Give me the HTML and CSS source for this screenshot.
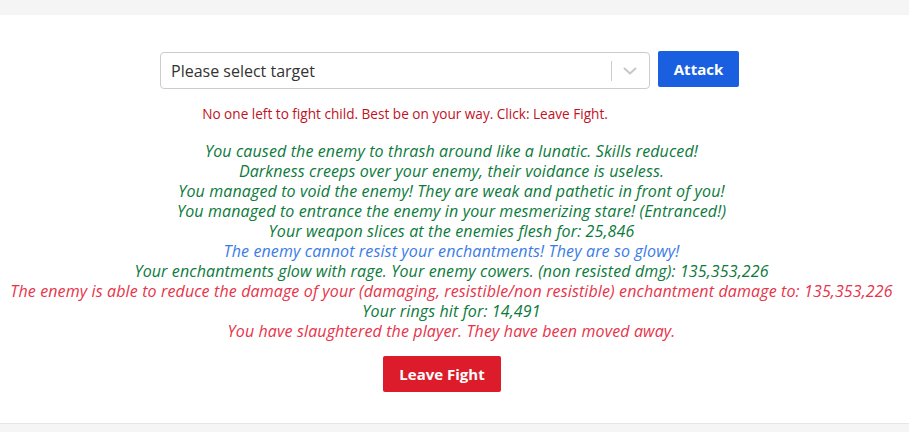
FILE: index.html
```html
<!DOCTYPE html>
<html>
<head>
<meta charset="utf-8">
<link rel="stylesheet" href="styles.css">
</head>
<body>
<div class="topbar"></div>
<main class="card">
  <div class="attack-row">
    <div class="select-col">
      <div class="select">
        <span class="placeholder">Please select target</span>
        <span class="indicators">
          <span class="sep"></span>
          <svg class="chev" width="20" height="20" viewBox="0 0 20 20"><path d="M4.5 7.5 L10 12.5 L15.5 7.5" fill="none" stroke="#c8c8c8" stroke-width="2" stroke-linecap="round" stroke-linejoin="round"/></svg>
        </span>
      </div>
      <p class="notice">No one left to fight child. Best be on your way. Click: Leave Fight.</p>
    </div>
    <button class="btn btn-attack">Attack</button>
  </div>
  <div class="log">
    <p class="ok">You caused the enemy to thrash around like a lunatic. Skills reduced!</p>
    <p class="ok">Darkness creeps over your enemy, their voidance is useless.</p>
    <p class="ok">You managed to void the enemy! They are weak and pathetic in front of you!</p>
    <p class="ok">You managed to entrance the enemy in your mesmerizing stare! (Entranced!)</p>
    <p class="ok">Your weapon slices at the enemies flesh for: 25,846</p>
    <p class="info">The enemy cannot resist your enchantments! They are so glowy!</p>
    <p class="ok">Your enchantments glow with rage. Your enemy cowers. (non resisted dmg): 135,353,226</p>
    <p class="bad">The enemy is able to reduce the damage of your (damaging, resistible/non resistible) enchantment damage to: 135,353,226</p>
    <p class="ok">Your rings hit for: 14,491</p>
    <p class="bad">You have slaughtered the player. They have been moved away.</p>
  </div>
  <div class="leave-row">
    <button class="btn btn-leave">Leave Fight</button>
  </div>
</main>
<div class="bottom"></div>
</body>
</html>
```

FILE: styles.css
```css
* { box-sizing: border-box; }
html, body { margin: 0; padding: 0; }
body {
  background: #f5f5f5;
  font-family: "Open Sans", "Noto Sans", sans-serif;
  color: #333;
  height: 432px;
  overflow: hidden;
}
.topbar { height: 15px; background: #f5f5f5; }
.card {
  background: #fff;
  height: 409px;
  border-bottom: 1px solid #e6e6e6;
  padding-top: 37px;
}
.attack-row {
  display: flex;
  justify-content: center;
  align-items: flex-start;
  gap: 8px;
  padding-right: 10px;
}
.select-col { width: 490px; display: flex; flex-direction: column; align-items: center; }
.select {
  width: 490px;
  height: 37px;
  border: 1px solid #cccccc;
  border-radius: 4px;
  display: flex;
  align-items: center;
  justify-content: space-between;
  padding-left: 10px;
}
.placeholder { font-size: 16px; color: #333; }
.indicators { display: flex; align-items: center; height: 100%; }
.sep { width: 1px; height: 20px; background: #cccccc; }
.chev { margin: 0 9px 0 8px; }
.notice {
  margin: 17px 0 0;
  font-size: 13.6px;
  color: #c1121f;
  line-height: 16px;
}
.btn {
  border: none;
  border-radius: 2px;
  color: #fff;
  font-family: inherit;
  font-weight: 700;
  font-size: 15px;
  height: 36px;
  cursor: pointer;
}
.btn-attack {
  background: #1a5fe0;
  width: 81px;
  margin-top: -1px;
}
.log {
  margin-top: 19px;
  text-align: center;
  font-style: italic;
  font-size: 16px;
  letter-spacing: 0.13px;
  line-height: 20px;
  padding-right: 6px;
}
.log p { margin: 0; }
.ok { color: #0b7a3b; }
.info { color: #3a7be8; }
.bad { color: #e8334a; }
.leave-row { display: flex; justify-content: center; margin-top: 15px; padding-right: 25px; }
.btn-leave { background: #dc1c2b; width: 118px; }
.bottom { background: #f5f5f5; }
```
